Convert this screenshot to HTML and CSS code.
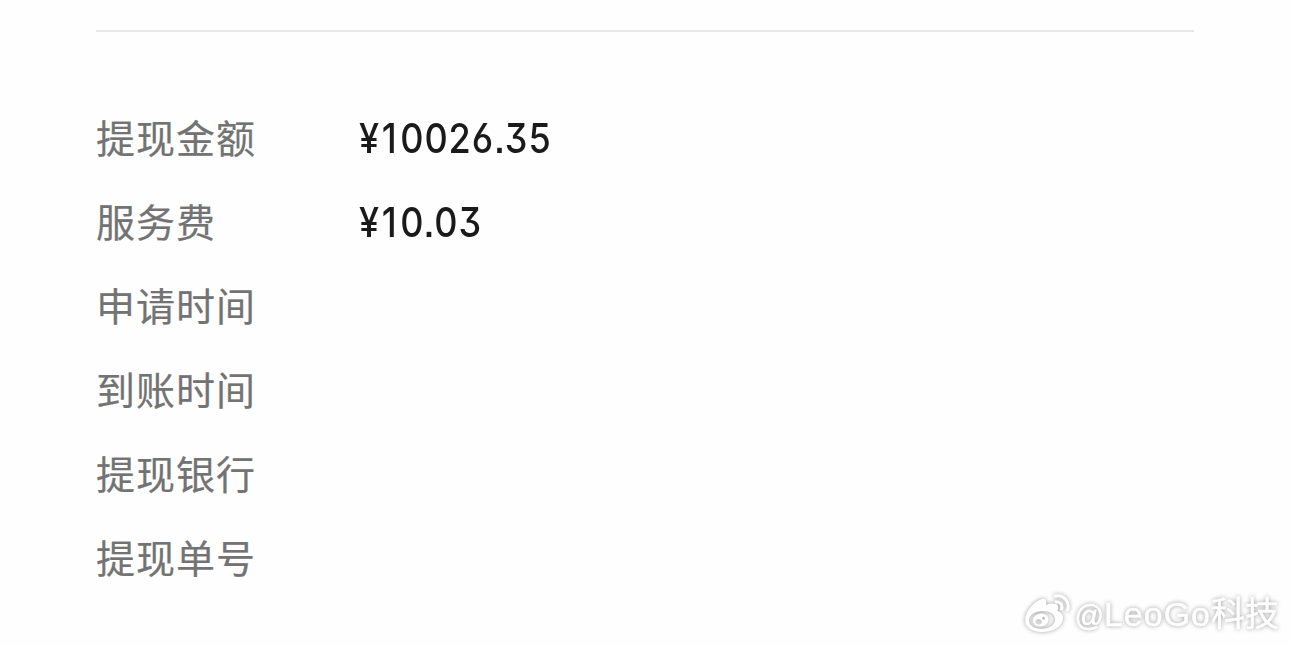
FILE: index.html
```html
<!DOCTYPE html>
<html lang="zh-CN">

<head>
    <meta charset="UTF-8">
    <meta name="viewport" content="width=device-width, initial-scale=1.0">
    <title>提现详情</title>
    <link rel="stylesheet" href="styles.css">
</head>

<body>
    <div class="container">
        <div class="detail-list">
            <div class="detail-item">
                <span class="label">提现金额</span>
                <span class="value">¥<span class="one">1</span>0026.35</span>
            </div>
            <div class="detail-item">
                <span class="label">服务费</span>
                <span class="value">¥<span class="one">1</span>0.03</span>
            </div>
            <div class="detail-item">
                <span class="label">申请时间</span>
            </div>
            <div class="detail-item">
                <span class="label">到账时间</span>
            </div>
            <div class="detail-item">
                <span class="label">提现银行</span>
            </div>
            <div class="detail-item">
                <span class="label">提现单号</span>
            </div>
        </div>
    </div>

    <!-- Watermark -->
    <div class="watermark">
        <svg class="watermark-logo" width="48" height="42" viewBox="0 0 48 42">
            <path fill="#fff" fill-rule="evenodd" d="M18 6c3-1 5 1 4 6 5-2 11-2 12 1 .6 2-.4 4-.6 5 4 1 6 4 5.600 8C38 34 29 39 18 39 8 39 1 34 1 27 1 19 10 8 18 6zM18.500 18C11 18 5 22 5 27.500S11 36 18 36s13-4 13-9.500S26 18 18.500 18z" />
            <path fill="#fff" fill-rule="evenodd" d="M17 20.500c5 0 8 3 7.500 6.500-.5 4-4 6.500-8.500 6.500s-7.500-3-7-6.500 4-6.500 8-6.500zM14.500 26a3.200 2.900 0 1 0 .1 0zM19.500 24a1.400 1.300 0 1 0 .1 0z" />
            <path fill="none" stroke="#fff" stroke-width="3" stroke-linecap="round" d="M32 9c4-.5 7 3 5.500 7M31 3c9-2 15 6 12.500 14" />
        </svg>
        <span class="watermark-text"><span class="at">@</span><span class="name">LeoGo</span>科技</span>
    </div>
</body>

</html>
```

FILE: styles.css
```css
body {
    font-family: "Noto Sans CJK SC", sans-serif;
    margin: 0;
    padding: 0;
    height: 645px;
    overflow: hidden;
    background-color: #fefefe;
}

.container {
    margin: 30px 96px 0;
    border-top: 2px solid #e8e8e8;
}

.detail-list {
    padding-top: 62px;
}

.detail-item {
    display: flex;
    align-items: flex-start;
    height: 84px;
}

.label {
    width: 263px;
    color: #737373;
    font-size: 39px;
    letter-spacing: 1px;
    line-height: 85px;
    -webkit-text-stroke: 0.2px #737373;
}

.value {
    color: #1a1a1a;
    font-family: Inter, sans-serif;
    font-size: 41px;
    font-weight: 500;
    font-feature-settings: "cv09", "cv03", "ss07";
    letter-spacing: 1px;
    line-height: 88px;
    transform: scaleX(0.88);
    transform-origin: left center;
}

.one {
    margin: 0 3px 0 2px;
}

.watermark {
    position: absolute;
    right: 11px;
    bottom: 7px;
    display: flex;
    align-items: center;
    height: 46px;
    color: #fff;
    filter: drop-shadow(0 0 2px rgba(0, 0, 0, 0.38));
}

.watermark-logo {
    margin-right: 2px;
    margin-bottom: 2px;
}

.watermark-text {
    font-family: "Liberation Sans", "Noto Sans CJK SC", sans-serif;
    font-size: 34px;
    line-height: 46px;
    -webkit-text-stroke: 0.5px #fff;
}

.at {
    font-size: 29px;
}

.name {
    letter-spacing: 1px;
}
```
